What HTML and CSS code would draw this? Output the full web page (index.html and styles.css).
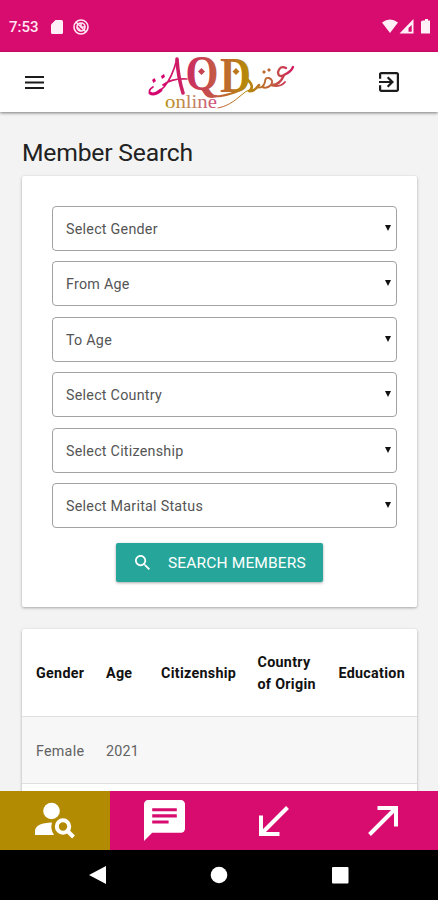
FILE: index.html
```html
<!DOCTYPE html>
<html lang="en">
<head>
<meta charset="utf-8">
<title>AQD online – Member Search</title>
<link rel="stylesheet" href="styles.css">
</head>
<body>
<div class="screen">
  <div class="status">
    <span class="clock">7:53</span>
    <svg class="sd" viewBox="0 0 12 14"><path d="M4.500 0H10.500Q12 0 12 1.500V12.500Q12 14 10.500 14H1.500Q0 14 0 12.500V4.500Z"/></svg>
    <svg class="sync" viewBox="0 0 16 16"><circle cx="8" cy="8" r="7"/><circle cx="8" cy="8" r="4"/><path d="M3 3L13 13M8 4V8H12M4 8L8 12"/></svg>
    <svg class="signals" viewBox="0 0 49 16"><path d="M0 3.500Q8 -2.500 16 3.500L8 14Z"/><path fill-rule="evenodd" d="M31.500 0V14.500H17.500ZM29.700 6L26.500 9V12.800H29.700Z"/><path d="M41 1.500H43V0H46V1.500H48V14.500H39V3Q39 1.500 41 1.500Z"/></svg>
  </div>

  <header class="bar">
    <svg class="menu" viewBox="0 0 19 13"><path d="M0 1H19M0 6.500H19M0 12H19"/></svg>
    <svg class="logo" viewBox="0 0 150 58">
      <defs>
        <linearGradient id="brand" gradientUnits="userSpaceOnUse" x1="0" y1="0" x2="150" y2="0">
          <stop offset="0.1" stop-color="#d5056f"/><stop offset="0.28" stop-color="#c9305f"/><stop offset="0.45" stop-color="#c45a43"/><stop offset="0.66" stop-color="#b58a08"/><stop offset="0.82" stop-color="#c0603c"/><stop offset="1" stop-color="#d5106a"/>
        </linearGradient>
        <linearGradient id="word" gradientUnits="userSpaceOnUse" x1="18" y1="0" x2="72" y2="0">
          <stop offset="0" stop-color="#b88a18"/><stop offset="0.5" stop-color="#c48762"/><stop offset="1" stop-color="#d2437e"/>
        </linearGradient>
      </defs>
      <g class="strokes" stroke="url(#brand)">
        <path stroke-width="3.600" d="M29 6Q30 24 35 40"/>
        <path stroke-width="1.700" d="M29 6Q24 25 16 34Q7 43 2 40Q0 37 5 34M15 32Q24 25 39 26"/>
        <path stroke-width="3" d="M2 40Q6 43 13 37"/>
        <path stroke-width="1" d="M70 55Q81 53 91 44Q98 37 104 36"/>
      </g>
      <g fill="url(#brand)">
        <path d="M4 27L6.500 25L8 28L5.500 30ZM13 23L16 21L17 24L14 26Z"/>
        <path d="M53.500 15L57 18.500L53.500 22L50 18.500ZM88 15L91.500 18.500L88 22L84.500 18.500Z"/>
        <text class="caps" x="37.500" y="37" textLength="33" lengthAdjust="spacingAndGlyphs">Q</text>
        <text class="caps" x="72" y="39" textLength="31" lengthAdjust="spacingAndGlyphs">D</text>
      </g>
      <g class="strokes" stroke="url(#brand)">
        <path stroke-width="2" d="M54 36Q62 45 73 43Q84 41 92 37"/>
        <path stroke-width="2.600" d="M100 27Q107 34 101 38Q106 39 111 32"/>
        <path stroke-width="1.900" d="M109 34Q115 36 117 29Q117 24 121 25Q126 27 123 32Q119 36 114 34M123 32Q132 35 137 29"/>
        <path stroke-width="2.400" d="M138 15Q132 12 130 19Q130 25 136 22Q143 19 145 14M136 22Q132 32 124 32"/>
      </g>
      <path fill="url(#brand)" d="M114 19L116 17L118 19L116 21ZM119 17L121 15L123 17L121 19Z"/>
      <text class="word" x="17" y="55" fill="url(#word)" textLength="52" lengthAdjust="spacingAndGlyphs">online</text>
    </svg>
    <svg class="exit" viewBox="3 3 18 18"><path d="M10.090 15.590L11.500 17l5-5-5-5-1.410 1.410L12.670 11H3v2h9.670l-2.580 2.590zM19 3H5c-1.110 0-2 .9-2 2v4h2V5h14v14H5v-4H3v4c0 1.100.89 2 2 2h14c1.100 0 2-.9 2-2V5c0-1.100-.9-2-2-2z"/></svg>
  </header>

  <main class="content">
    <h1>Member Search</h1>
    <form class="card form">
      <div class="select">Select Gender</div>
      <div class="select">From Age</div>
      <div class="select">To Age</div>
      <div class="select">Select Country</div>
      <div class="select">Select Citizenship</div>
      <div class="select">Select Marital Status</div>
      <button type="button" class="search"><svg viewBox="3 3 17.500 17.500"><path d="M15.500 14h-.79l-.28-.27C15.410 12.590 16 11.110 16 9.500 16 5.910 13.090 3 9.500 3S3 5.910 3 9.500 5.910 16 9.500 16c1.610 0 3.090-.59 4.230-1.570l.27.28v.79l5 4.990L20.490 19l-4.990-5zm-6 0C7.010 14 5 11.990 5 9.500S7.010 5 9.500 5 14 7.010 14 9.500 11.990 14 9.500 14z"/></svg><span>SEARCH MEMBERS</span></button>
    </form>
    <section class="card results">
      <div class="row head"><span>Gender</span><span>Age</span><span>Citizenship</span><span>Country<br>of Origin</span><span>Education</span></div>
      <div class="row body"><span>Female</span><span>2021</span></div>
    </section>
  </main>

  <nav class="tabs">
    <div class="tab active"><svg class="person" viewBox="0 0 40 37"><circle cx="16.500" cy="9" r="8.300"/><path d="M0 33V28.500Q1 21 17 20.500Q15 27 19 33Z"/><circle class="lens" cx="28" cy="24.500" r="6.200"/><path class="handle" d="M32.500 29L38.500 35"/></svg></div>
    <div class="tab"><svg class="chat" viewBox="2 2 20 20"><path d="M20 2H4c-1.100 0-1.990.9-1.990 2L2 22l4-4h14c1.100 0 2-.9 2-2V4c0-1.100-.9-2-2-2zM6 9h12v1.500H6V9zm8 4.500H6V12h8v1.500zm4-6H6V6h12v1.500z"/></svg></div>
    <div class="tab"><svg class="arrow" viewBox="0 0 30 30"><path d="M28.500 1.500L2 28M2 9.500V28H20.500"/></svg></div>
    <div class="tab"><svg class="arrow" viewBox="0 0 30 30"><path d="M1.500 28.500L28 2M9.500 2H28V20.500"/></svg></div>
  </nav>
  <div class="system">
    <svg viewBox="0 0 18 20"><path d="M0 10L17 1V19Z"/></svg>
    <svg viewBox="0 0 18 20"><circle cx="9" cy="10" r="8.300"/></svg>
    <svg viewBox="0 0 18 20"><rect x="1" y="2" width="16.500" height="16.500" rx="1"/></svg>
  </div>
</div>
</body>
</html>
```
FILE: styles.css
```css
* { box-sizing: border-box; }
body { margin: 0; font-family: Roboto, sans-serif; color: #111; }
svg { display: block; flex: none; }
.screen { height: 900px; display: flex; flex-direction: column; background: #f3f3f3; overflow: hidden; }

.status { flex: none; height: 52px; display: flex; align-items: center; background: #d80b6e; color: #ffe6f2; padding: 2px 7px 0 9px; }
.clock { font-size: 15px; width: 42px; font-weight: 500; }
.status svg { fill: #fff0f7; }
.sd { width: 12px; height: 14px; }
.sync { width: 16px; height: 16px; margin-left: 10px; }
.status .sync { fill: none; stroke: #ffe6f2; stroke-width: 1.600; }
.signals { width: 49px; height: 16px; margin-left: auto; }

.bar { flex: none; height: 60px; display: flex; align-items: center; justify-content: space-between; background: #fff; padding: 0 39px 0 25px; box-shadow: 0 1px 3px rgba(0,0,0,.5); }
.menu { width: 19px; height: 13px; stroke: #1c1c1c; stroke-width: 2; }
.logo { width: 150px; height: 58px; margin-left: 22px; overflow: visible; }
.strokes { fill: none; stroke-linecap: round; stroke-linejoin: round; }
.caps { font: 700 50px "Liberation Serif", serif; }
.word { font: 18.500px "Liberation Serif", serif; }
.exit { width: 20px; height: 20px; fill: #1c1c1c; }

.content { flex: 1; min-height: 0; overflow: hidden; padding: 26px 21px 0 22px; }
h1 { margin: 0 0 9px; font-size: 24.700px; line-height: 29px; font-weight: 400; color: #222; letter-spacing: -.2px; }
.card { background: #fff; border-radius: 2px; box-shadow: 0 1px 3px rgba(0,0,0,.32); }
.form { height: 431px; padding: 30px 20px 0 30px; display: flex; flex-direction: column; }
.select { height: 45px; margin-bottom: 10.400px; border: 1px solid #a2a2a2; border-radius: 4px; padding: 1px 5px 0 13px; display: flex; align-items: center; justify-content: space-between; font-size: 14.300px; color: #555; letter-spacing: .25px; }
.select::after { content: ""; border: 3px solid transparent; border-top: 6px solid #111; border-bottom: 0; margin-top: -2px; }
.search { align-self: center; width: 207px; height: 39px; margin: 5px 10px 0 0; padding: 0 0 0 19px; border: 0; border-radius: 2px; background: #26a69a; color: #fff; display: flex; align-items: center; font: 400 15.500px Roboto, sans-serif; letter-spacing: .15px; white-space: nowrap; box-shadow: 0 1px 3px rgba(0,0,0,.35); }
.search svg { width: 15px; height: 15px; fill: #fff; margin-right: 18px; }

.results { margin-top: 22px; height: 190px; font-size: 14.300px; }
.row { display: grid; grid-template-columns: 70px 55px 96.500px 81px 1fr; align-items: center; padding-left: 14px; border-bottom: 1px solid #e0e0e3; letter-spacing: .25px; white-space: nowrap; }
.head { height: 88px; font-weight: 700; line-height: 22px; color: #111; letter-spacing: .3px; }
.body { height: 67px; background: #f7f7f7; color: #626262; padding-top: 1px; }

.tabs { flex: none; height: 59px; display: grid; grid-template-columns: repeat(4, 1fr); background: #d80b6e; }
.tab { display: flex; align-items: center; justify-content: center; }
.active { background: #b38b03; }
.tab svg { fill: #fff; }
.person { width: 40px; height: 37px; }
.tab .lens { fill: none; stroke: #fff; stroke-width: 4; }
.handle { stroke: #fff; stroke-width: 4; }
.chat { width: 41px; height: 41px; }
.tab .arrow { width: 30px; height: 30px; fill: none; stroke: #fff; stroke-width: 4; }
.system { flex: none; height: 50px; background: #000; display: flex; align-items: center; justify-content: space-between; padding: 0 89px 0 89px; }
.system svg { width: 18px; height: 20px; fill: #fff; }
```
